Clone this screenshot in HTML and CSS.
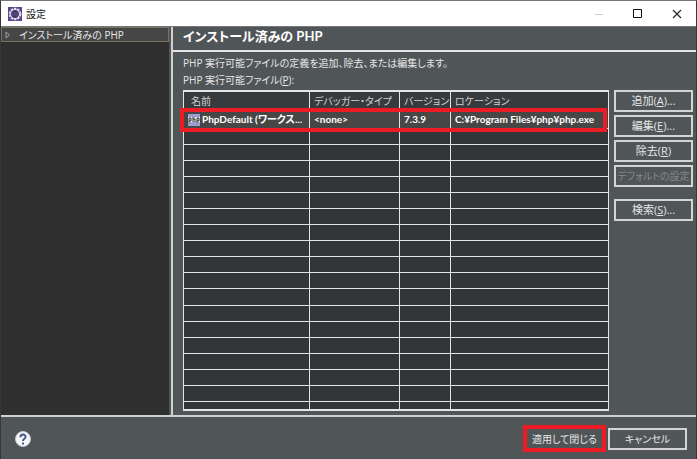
FILE: index.html
```html
<!DOCTYPE html>
<html lang="ja">
<head>
<meta charset="utf-8">
<title>設定</title>
<link rel="stylesheet" href="styles.css">
</head>
<body>
<div class="window">
  <header class="titlebar">
    <svg class="app-icon" viewBox="0 0 14 14" aria-hidden="true">
      <rect width="14" height="14" fill="#5b4390"/>
      <circle cx="7" cy="7" r="5.3" fill="none" stroke="#e4e1e6" stroke-width="2" stroke-dasharray="2.3 1.03"/>
      <circle cx="7" cy="7" r="4.5" fill="#40356b" stroke="#e4e1e6"/>
      <path d="M3 6h8M3 8h8" stroke="#6c6193" stroke-width=".7"/>
    </svg>
    <h1 class="window-title">設定</h1>
    <button class="caption" aria-label="最小化"><svg viewBox="0 0 10 10"><path d="M1 5.5h8" stroke="#ccc"/></svg></button>
    <button class="caption" aria-label="最大化"><svg viewBox="0 0 10 10"><path d="M.5 .5h8v8h-8z" fill="none" stroke="#111"/></svg></button>
    <button class="caption" aria-label="閉じる"><svg viewBox="0 0 10 10"><path d="M1 1l8 8M9 1l-8 8" stroke="#222" stroke-width="1.1"/></svg></button>
  </header>
  <div class="main">
    <nav class="tree">
      <a class="tree-item" href="#php">
        <svg class="arrow" viewBox="0 0 6 8" aria-hidden="true"><path d="M1 1l3.5 3L1 7z" fill="none" stroke="#aaa" stroke-width=".9"/></svg>
        <span>インストール済みの PHP</span>
      </a>
    </nav>
    <main class="page" id="php">
      <h2 class="page-title">インストール済みの PHP</h2>
      <div class="content">
        <p class="text">PHP 実行可能ファイルの定義を追加、除去、または編集します。</p>
        <p class="text">PHP 実行可能ファイル(<u>P</u>):</p>
        <div class="editor">
          <div class="table-box">
            <table class="table">
              <colgroup><col class="c-name"><col class="c-debug"><col class="c-version"><col></colgroup>
              <thead><tr><th>名前</th><th>デバッガー・タイプ</th><th>バージョン</th><th>ロケーション</th></tr></thead>
              <tbody>
                <tr class="selected">
                  <td><span class="name"><svg class="php-icon" viewBox="0 0 12 12" aria-hidden="true"><rect width="12" height="12" fill="#9c9cd8"/><path d="M1 10V4h2v3H1M5 2v6M5 5h2v3M9 10V4h2v3H9" fill="none" stroke="#fff" stroke-width="2.2"/><path d="M1 10V4h2v3H1M5 2v6M5 5h2v3M9 10V4h2v3H9" fill="none" stroke="#222"/></svg>PhpDefault (ワークス...</span></td>
                  <td>&lt;none&gt;</td><td>7.3.9</td><td>C:¥Program Files¥php¥php.exe</td>
                </tr>
                <tr><td></td><td></td><td></td><td></td></tr>
                <tr><td></td><td></td><td></td><td></td></tr>
                <tr><td></td><td></td><td></td><td></td></tr>
                <tr><td></td><td></td><td></td><td></td></tr>
                <tr><td></td><td></td><td></td><td></td></tr>
                <tr><td></td><td></td><td></td><td></td></tr>
                <tr><td></td><td></td><td></td><td></td></tr>
                <tr><td></td><td></td><td></td><td></td></tr>
                <tr><td></td><td></td><td></td><td></td></tr>
                <tr><td></td><td></td><td></td><td></td></tr>
                <tr><td></td><td></td><td></td><td></td></tr>
                <tr><td></td><td></td><td></td><td></td></tr>
                <tr><td></td><td></td><td></td><td></td></tr>
                <tr><td></td><td></td><td></td><td></td></tr>
                <tr><td></td><td></td><td></td><td></td></tr>
                <tr><td></td><td></td><td></td><td></td></tr>
                <tr><td></td><td></td><td></td><td></td></tr>
                <tr class="last"><td></td><td></td><td></td><td></td></tr>
              </tbody>
            </table>
            <div class="highlight"></div>
          </div>
          <div class="actions">
            <button class="btn">追加(<u>A</u>)...</button>
            <button class="btn">編集(<u>E</u>)...</button>
            <button class="btn">除去(<u>R</u>)</button>
            <button class="btn kana" disabled>デフォルトの設定</button>
            <button class="btn search">検索(<u>S</u>)...</button>
          </div>
        </div>
      </div>
    </main>
  </div>
  <footer class="footer">
    <button class="help" aria-label="ヘルプ"><svg viewBox="0 0 16 16"><circle cx="8" cy="8" r="7.5" fill="#f4f6fa" stroke="#c3c9d6"/><path d="M5.4 6.3C5.4 2.6 10.8 2.8 10.6 6C10.5 7.8 8 7.9 8 10" fill="none" stroke="#465a8c" stroke-width="2"/><path d="M7 11.5h2v2H7z" fill="#465a8c"/></svg></button>
    <button class="btn kana apply">適用して閉じる</button>
    <button class="btn kana cancel">キャンセル</button>
  </footer>
</div>
</body>
</html>
```
FILE: styles.css
```css
* { box-sizing: border-box; }

body {
  margin: 0;
  background: #505558;
  color: #e6e6e6;
  font: 11px/16px "Open Sans", "Noto Sans CJK JP", sans-serif;
  font-feature-settings: "palt";
}

h1, h2, p { margin: 0; }
button { font: inherit; font-feature-settings: inherit; color: inherit; padding: 0; }
svg { display: block; }

.window {
  display: flex;
  flex-direction: column;
  min-height: 100vh;
  border: 1px solid #38383a;
  border-top-color: #777;
  border-bottom: 0;
}

.titlebar {
  display: flex;
  align-items: center;
  height: 25px;
  padding-left: 7px;
  background: #fff;
  color: #111;
}

.app-icon { width: 14px; height: 14px; }
.window-title { flex: 1; margin-left: 4px; font-size: 10px; font-weight: 400; }
.caption { display: grid; place-items: center; width: 39px; height: 24px; border: 0; background: none; }
.caption svg { width: 10px; height: 10px; }

.main { display: flex; flex: 1; border-top: 1px solid #777; }

.tree {
  flex: 0 0 170px;
  background: #2f2f2f;
  border-right: 2px solid #505558;
}

.tree-item {
  display: flex;
  align-items: center;
  height: 15px;
  padding-left: 3px;
  border: 1px solid #77715f;
  background: #464646;
  color: #e6e6e6;
  font-size: 10px;
  text-decoration: none;
}

.arrow { width: 6px; height: 8px; margin-right: 8px; }

.page {
  flex: 1;
  min-width: 0;
  border-left: 2px solid #d0d0d0;
}

.page-title {
  height: 25px;
  padding-left: 10px;
  border-bottom: 2px solid #e5e5e5;
  color: #fff;
  font-family: Lato, "Noto Sans CJK JP", sans-serif;
  font-size: 13px;
  line-height: 18px;
  font-weight: 700;
}

.content { padding: 3px 3px 4px 10px; }
.text { height: 17px; font-size: 10px; white-space: nowrap; }
.text + .text { margin-bottom: 1px; }

.editor { display: flex; align-items: flex-start; gap: 5px; }

.table-box { position: relative; flex: 1; min-width: 0; border: 2px solid #e5e5e5; border-width: 2px 1px; }
.table { width: 100%; height: 317px; table-layout: fixed; border-collapse: separate; border-spacing: 0; background: #333639; }
.c-name { width: 126px; }
.c-debug { width: 90px; }
.c-version { width: 51px; }

.table th, .table td {
  padding: 0 4px;
  border-right: 1px solid #e5e5e5;
  border-bottom: 1px solid #e5e5e5;
  font-size: 10px;
  line-height: 15px;
  text-align: left;
  white-space: nowrap;
}

.table th:last-child, .table td:last-child { border-right: 0; }
.table th { height: 19px; padding: 0 2px 0 4px; border-bottom: 0; font-weight: 400; background: #373b3e; color: #d0d0d0; }
.table th:first-child { padding-left: 7px; }
.table .selected td { height: 18px; background: #474747; color: #fff; font-family: Lato, "Noto Sans CJK JP", sans-serif; font-weight: 700; }
.table .last td { height: 7px; border-bottom: 0; }
.name { display: flex; align-items: center; gap: 2px; }
.php-icon { flex: none; width: 12px; height: 12px; }

.highlight {
  position: absolute;
  top: 16px;
  left: -4px;
  right: 1px;
  height: 24px;
  border: 4px solid #ed1c24;
}

.actions { display: flex; flex-direction: column; gap: 3px; width: 79px; }

.btn {
  height: 22px;
  border: 2px solid #d4d4d4;
  background: #505558;
  line-height: 16px;
  white-space: nowrap;
}

.kana { font-size: 10px; }
.btn:disabled { color: #85898b; }
.search { margin-top: 9px; }

.footer {
  display: flex;
  align-items: center;
  height: 45px;
  padding: 0 9px 0 14px;
  border-top: 2px solid #d0d0d0;
}

.help { width: 16px; height: 16px; margin-right: auto; border: 0; background: none; }
.apply { width: 83px; height: 27px; border: 4px solid #ed1c24; }
.cancel { width: 79px; margin-left: 2px; }
```
